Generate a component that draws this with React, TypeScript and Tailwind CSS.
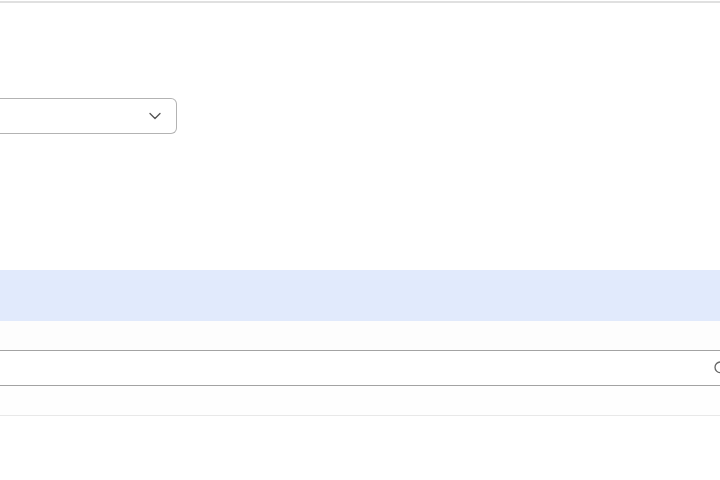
import { ChevronDown, Search } from "lucide-react";

const App = () => {
  return (
    <div className="w-[720px] h-[480px] overflow-hidden bg-white font-['Liberation_Sans',sans-serif] pt-px">
      {/* top rule */}
      <div className="border-t-2 border-[#e0e0e0]" />

      {/* select row */}
      <div className="pt-[95px]">
        <div className="w-[177px] h-[36px] flex items-center justify-end pr-[11px] border border-l-0 border-[#b3b3b3] rounded-r-[6px]">
          <ChevronDown className="w-5 h-5 text-[#555]" strokeWidth={1.6} />
        </div>
      </div>

      {/* highlighted row */}
      <div className="mt-[136px] h-[51px] bg-[#e1eafc]" />
      <div className="h-[29px] bg-[#fdfdfd]" />

      {/* search input */}
      <div className="h-[36px] flex items-center justify-end border-y border-[#a3a3a3] -mr-[9px]">
        <Search className="w-4 h-4 text-[#666]" strokeWidth={2} />
      </div>
      <div className="h-[30px] border-b border-[#e8e8e8] bg-[#fefefe]" />
    </div>
  );
};

export default App;
